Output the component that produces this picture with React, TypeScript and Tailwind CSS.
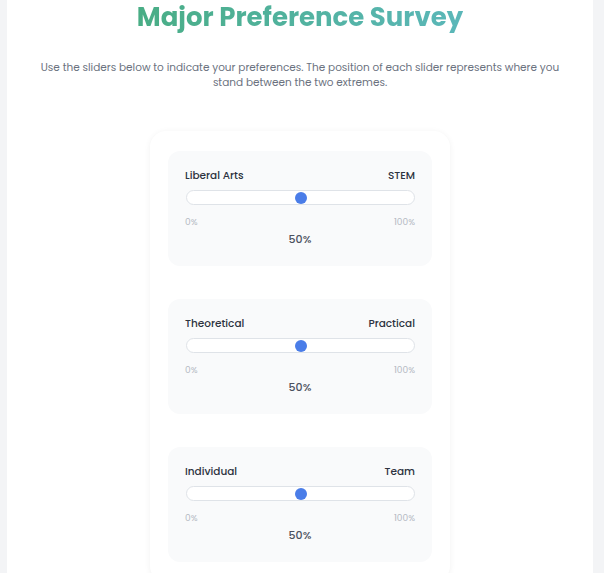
const sliders = [
  { left: "Liberal Arts", right: "STEM", value: 50 },
  { left: "Theoretical", right: "Practical", value: 50 },
  { left: "Individual", right: "Team", value: 50 },
];

const SliderBlock = ({ left, right, value }: { left: string; right: string; value: number }) => {
  return (
    <div className="bg-[#f9fafb] rounded-xl px-[17px] pt-[18px] pb-[20px]">
      <div className="flex justify-between text-[10.5px] font-medium text-[#2d3340] leading-[14px]">
        <span>{left}</span>
        <span>{right}</span>
      </div>
      <div className="relative mt-[7px] ml-[1px] h-[15px] rounded-full bg-white border border-[#dfe3e8]">
        <div
          className="absolute top-1/2 w-[12px] h-[12px] -translate-x-1/2 -translate-y-1/2 rounded-full bg-[#4a7de8]"
          style={{ left: `${value}%` }}
        />
      </div>
      <div className="flex justify-between mt-[11px] text-[9px] text-[#b3b8c2] leading-[12px]">
        <span>0%</span>
        <span>100%</span>
      </div>
      <div className="text-center mt-[4px] text-[11px] font-medium text-[#4b5160] leading-[14px]">
        {value}%
      </div>
    </div>
  );
};

export default function App() {
  return (
    <div className="min-h-[573px] bg-[#f3f4f6] font-['Poppins','Inter','Noto_Sans',sans-serif]">
      <div className="ml-[7px] w-[586px] min-h-[573px] bg-white pt-0">
        <h1 className="text-center text-[26px] font-bold leading-[36px] mt-[-1px]">
          <span className="bg-gradient-to-r from-[#49ad85] to-[#5bb7b9] bg-clip-text text-transparent">
            Major Preference Survey
          </span>
        </h1>
        <p className="mx-auto mt-[25px] w-[530px] text-center text-[10.5px] leading-[15px] text-[#6b7280]">
          Use the sliders below to indicate your preferences. The position of each slider represents where you stand between the two extremes.
        </p>
        <div className="mx-auto mt-[41px] w-[300px] rounded-2xl bg-white px-[18px] pt-[20px] pb-[20px] shadow-[0_1px_6px_rgba(0,0,0,0.06)] flex flex-col gap-[33px]">
          {sliders.map((s) => (
            <SliderBlock key={s.left} {...s} />
          ))}
        </div>
      </div>
    </div>
  );
}
